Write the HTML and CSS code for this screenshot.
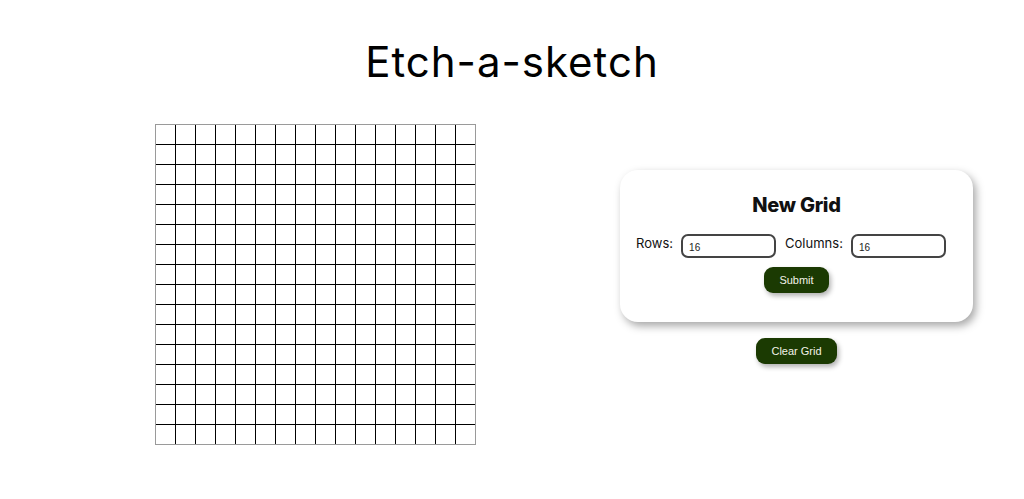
FILE: index.html
```html
<!DOCTYPE html>
<html lang="en">
<head>
<meta charset="utf-8">
<title>Etch-a-sketch</title>
<link rel="stylesheet" href="styles.css">
</head>
<body>
<h1 class="title">Etch-a-sketch</h1>
<main class="layout">
  <div class="grid" id="grid"></div>
  <div class="side">
    <form class="card">
      <h2 class="card-title">New Grid</h2>
      <div class="fields">
        <label class="label" for="rows">Rows:</label>
        <input class="input" id="rows" type="text" value="16">
        <label class="label" for="cols">Columns:</label>
        <input class="input" id="cols" type="text" value="16">
      </div>
      <button class="btn" type="button">Submit</button>
    </form>
    <button class="btn btn-clear" type="button">Clear Grid</button>
  </div>
</main>
<script src="script.js"></script>
</body>
</html>
```
FILE: script.js
```js
const grid = document.getElementById('grid');
for (let i = 0; i < 256; i++) {
  const c = document.createElement('div');
  c.className = 'cell';
  grid.appendChild(c);
}
```
FILE: styles.css
```css
* { box-sizing: border-box; }
body {
  margin: 0;
  background: #fff;
  font-family: "Inter", "Noto Sans", sans-serif;
  color: #111;
}
.title {
  margin: 0;
  padding-top: 37px;
  text-align: center;
  font-weight: 400;
  font-size: 42px;
  line-height: 50px;
  letter-spacing: 1px;
  color: #000;
}
.layout {
  display: flex;
  align-items: flex-start;
  padding-left: 155px;
  margin-top: 37px;
  gap: 144px;
}
.grid {
  display: grid;
  grid-template-columns: repeat(16, 19px);
  grid-auto-rows: 19px;
  gap: 1px;
  background: #000;
  border: 1px solid #9a9a9a;
  width: 321px;
  height: 321px;
}
.cell { background: #fff; }
.side {
  margin-top: 46px;
  display: flex;
  flex-direction: column;
  align-items: center;
  gap: 16px;
}
.card {
  width: 353px;
  height: 152px;
  background: #fff;
  border-radius: 18px;
  box-shadow: 3px 4px 8px rgba(0,0,0,0.35);
  display: flex;
  flex-direction: column;
  align-items: center;
  padding-top: 22px;
}
.card-title {
  margin: 0;
  font-size: 20px;
  font-weight: 800;
  line-height: 26px;
  letter-spacing: -0.3px;
}
.fields {
  display: flex;
  align-items: flex-start;
  margin-top: 16px;
  padding-right: 10px;
  gap: 8px;
}
.label {
  font-size: 13px;
  line-height: 16px;
  margin-top: 1px;
}
.input {
  width: 95px;
  height: 24px;
  border: 2px solid #444;
  border-radius: 7px;
  padding: 2px 6px 0;
  font-family: "Liberation Sans", Arial, sans-serif;
  font-size: 10px;
  color: #222;
  margin-right: 1px;
}
.btn {
  margin-top: 9px;
  width: 65px;
  height: 26px;
  border: none;
  border-radius: 9px;
  background: #1b3a02;
  color: #f2f2e8;
  font-family: "Liberation Sans", Arial, sans-serif;
  font-size: 11px;
  box-shadow: 2px 3px 5px rgba(0,0,0,0.3);
}
.btn-clear {
  margin-top: 0;
  width: 81px;
}
```
